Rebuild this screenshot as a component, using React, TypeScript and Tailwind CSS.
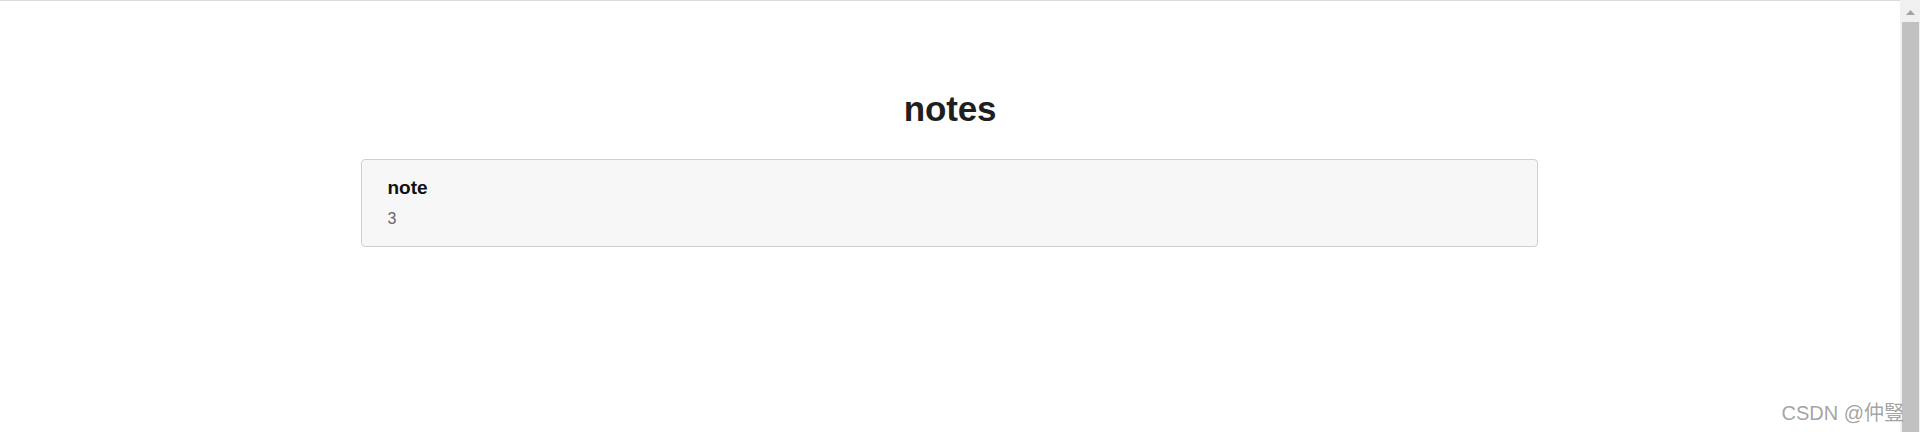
export default function App() {
  const notes = [{ title: "note", body: "3" }];

  return (
    <div className="relative flex h-[432px] w-[1920px] overflow-hidden bg-white font-['Liberation_Sans',Arial,sans-serif] text-[#222]">
      {/* page */}
      <div className="flex flex-1 flex-col items-center border-t border-[#dcdcdc]">
        <h1 className="mt-[88px] text-[35px] font-bold leading-[40px] tracking-[-0.2px] text-[#1f1f1f]">
          notes
        </h1>
        <div className="mt-[30px] mr-[2px] flex w-[1177px] flex-col gap-[4px]">
          {notes.map((n) => (
            <div
              key={n.title}
              className="h-[88px] rounded-[4px] border border-[#cfcfcf] bg-[#f7f7f7] px-[26px] pt-[17px]"
            >
              <div className="text-[19px] font-bold leading-[22px] text-[#111]">{n.title}</div>
              <div className="mt-[10px] text-[16px] font-normal leading-[20px] text-[#666]">{n.body}</div>
            </div>
          ))}
        </div>
      </div>

      {/* scrollbar */}
      <div className="flex w-[20px] flex-col items-center bg-[#f0f0f0] pt-[10px]">
        <svg width="9" height="5" viewBox="0 0 9 5">
          <polygon points="4.5,0 9,5 0,5" fill="#a3a3a3" />
        </svg>
        <div className="mt-[7px] w-[17px] flex-1 bg-[#c1c1c1]" />
      </div>

      {/* watermark */}
      <div className="absolute bottom-[8px] right-[16px] text-[20px] leading-[22px] text-[#999]/90 font-['Liberation_Sans','Noto_Sans_CJK_SC',sans-serif]">
        CSDN @仲豎
      </div>
    </div>
  );
}
